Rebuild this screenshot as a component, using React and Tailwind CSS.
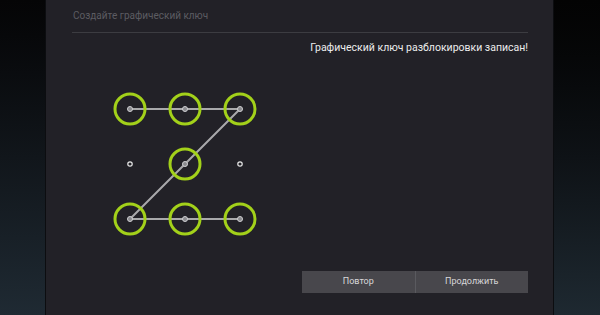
import React from "react";

const GRID = [
  { x: 130, y: 109, on: true },
  { x: 185, y: 109, on: true },
  { x: 240, y: 109, on: true },
  { x: 130, y: 164, on: false },
  { x: 185, y: 164, on: true },
  { x: 240, y: 164, on: false },
  { x: 130, y: 219, on: true },
  { x: 185, y: 219, on: true },
  { x: 240, y: 219, on: true },
];

// Z-образный ключ
const PATH = "130,109 185,109 240,109 185,164 130,219 185,219 240,219";

const PatternGrid = () => (
  <svg width="600" height="315" className="absolute left-0 top-0 pointer-events-none">
    <polyline points={PATH} fill="none" stroke="#a9a9ab" strokeWidth="2" strokeLinejoin="round" />
    {GRID.map((p, i) =>
      p.on ? (
        <g key={i}>
          <circle cx={p.x} cy={p.y} r="15" fill="none" stroke="#a3d11a" strokeWidth="3" />
          <circle cx={p.x} cy={p.y} r="2.5" fill="#8a8a8e" stroke="#cfcfd2" strokeWidth="1" />
        </g>
      ) : (
        <circle key={i} cx={p.x} cy={p.y} r="2.2" fill="#222127" stroke="#e6e6e6" strokeWidth="1.2" />
      )
    )}
  </svg>
);

export default function App() {
  return (
    <div
      className="relative w-[600px] h-[315px] flex overflow-hidden"
      style={{ fontFamily: "Roboto, 'Liberation Sans', sans-serif" }}
    >
      {/* левая полоса */}
      <div className="w-[46px] h-full bg-gradient-to-b from-[#050506] via-[#11161b] to-[#1f2a33] border-r border-[#0c0d10]" />

      {/* центральная панель */}
      <div className="w-[507px] h-full bg-[#222127] flex flex-col pl-[26px] pr-[25px]">
        <div className="h-[33px] border-b border-[#3c3c41] flex items-center pb-[1px] pl-px">
          <span className="text-[10px] text-[#5c5c62]">Создайте графический ключ</span>
        </div>

        <div className="flex justify-end pt-[7px]">
          <span className="text-[10.5px] text-[#ececec]">
            Графический ключ разблокировки записан!
          </span>
        </div>

        <div className="flex-1" />

        <div className="flex justify-end pb-[22px]">
          <div className="w-[226px] h-[22px] flex bg-[#48474c]">
            <button className="flex-1 text-[9px] text-[#d8d8da] border-r border-[#5a5a5f]">Повтор</button>
            <button className="flex-1 text-[9px] text-[#d8d8da]">Продолжить</button>
          </div>
        </div>
      </div>

      {/* правая полоса */}
      <div className="flex-1 h-full bg-gradient-to-b from-[#030303] via-[#0e1216] to-[#1e2931] border-l border-[#0c0d10]" />

      <PatternGrid />
    </div>
  );
}
